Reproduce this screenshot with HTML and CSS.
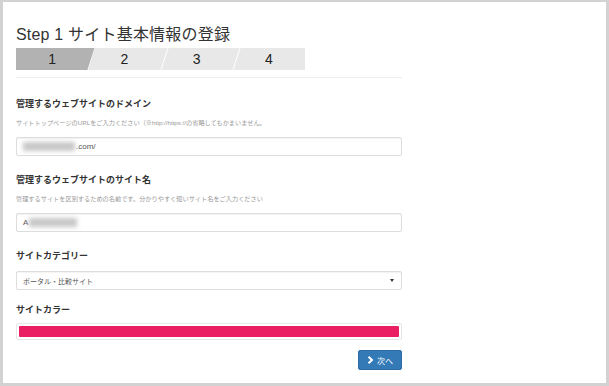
FILE: index.html
```html
<!DOCTYPE html>
<html>
	<head>
		<title>Step 1 サイト基本情報の登録</title>
		<link rel="stylesheet" href="styles.css">
	</head>
	<body>
		<div class="frame">
			<div class="wizard">
				<h2 class="title">Step 1 サイト基本情報の登録</h2>
				<div class="steps">
					<div class="step active">1</div>
					<div class="step">2</div>
					<div class="step">3</div>
					<div class="step">4</div>
				</div>
				<hr class="rule">

				<div class="group first">
					<label class="label">管理するウェブサイトのドメイン</label>
					<p class="help">サイトトップページのURLをご入力ください（※http://https://の省略してもかまいません。</p>
					<div class="field"><span class="blur blur-domain"></span>.com/</div>
				</div>

				<div class="group">
					<label class="label">管理するウェブサイトのサイト名</label>
					<p class="help">管理するサイトを区別するための名前です。分かりやすく短いサイト名をご入力ください</p>
					<div class="field">A<span class="blur blur-name"></span></div>
				</div>

				<div class="group">
					<label class="label">サイトカテゴリー</label>
					<div class="field select">ポータル・比較サイト<span class="caret"></span></div>
				</div>

				<div class="group color-group">
					<label class="label">サイトカラー</label>
					<div class="color"><div class="swatch"></div></div>
				</div>

				<div class="actions">
					<button class="next">
						<svg width="7" height="8" viewBox="0 0 7 8"><path d="M1.5 0.8 L5 4 L1.5 7.2" fill="none" stroke="#fff" stroke-width="2"/></svg>
						次へ
					</button>
				</div>
			</div>
		</div>
	</body>
</html>
```

FILE: styles.css
```css
body {
	margin: 0;
	font-family: "Liberation Sans", "Noto Sans CJK JP", sans-serif;
	color: #333;
}
.frame {
	width: 609px;
	height: 386px;
	box-sizing: border-box;
	border: 3px solid #d2d2d2;
	border-top-width: 2px;
	background: #fff;
}
.wizard {
	width: 386px;
	padding: 0 0 0 13px;
}
.title {
	margin: 0;
	padding-top: 22px;
	font-size: 16px;
	font-weight: normal;
	line-height: 22px;
	letter-spacing: 0.2px;
	color: #333;
}
.steps {
	display: flex;
	width: 289px;
	height: 22px;
	margin-top: 2px;
	overflow: hidden;
}
.step {
	flex: 1;
	position: relative;
	background: #e8e8e8;
	text-align: center;
	font-size: 14px;
	line-height: 22px;
	color: #222;
}
.step.active {
	background: #b2b2b2;
}
.step::after {
	content: "";
	position: absolute;
	top: 0;
	bottom: 0;
	right: -4px;
	width: 7px;
	background: inherit;
	border-right: 1px solid #fff;
	transform: skewX(-18deg);
	z-index: 1;
}
.step:last-child::after {
	display: none;
}
.rule {
	margin: 7px 0 0;
	border: 0;
	border-top: 1px solid #eee;
}
.group {
	margin-top: 18px;
}
.group.first {
	margin-top: 20px;
}
.group.color-group {
	margin-top: 14px;
}
.label {
	display: block;
	font-size: 9px;
	font-weight: bold;
	line-height: 12px;
	color: #333;
}
.help {
	margin: 9px 0 0;
	font-size: 6.2px;
	line-height: 8px;
	color: #999;
}
.field {
	display: flex;
	align-items: center;
	box-sizing: border-box;
	height: 19px;
	margin-top: 10px;
	padding: 0 6px;
	border: 1px solid #ddd;
	border-radius: 2px;
	box-shadow: inset 0 1px 1px rgba(0, 0, 0, 0.05);
	font-size: 8px;
	color: #555;
}
.blur {
	display: inline-block;
	height: 9px;
	background: #c8c8c8;
	filter: blur(2px);
}
.blur-domain {
	width: 52px;
	margin-right: 1px;
}
.blur-name {
	width: 48px;
	margin-left: 1px;
}
.select {
	justify-content: space-between;
	margin-top: 9px;
	font-size: 7px;
}
.caret {
	width: 0;
	height: 0;
	margin-right: 1px;
	border-left: 2px solid transparent;
	border-right: 2px solid transparent;
	border-top: 3px solid #333;
}
.color {
	height: 11px;
	margin-top: 7px;
	padding: 2px;
	border: 1px solid #e6e6e6;
	border-radius: 2px;
}
.swatch {
	height: 11px;
	background: #e91e63;
	border-radius: 1px;
}
.actions {
	display: flex;
	justify-content: flex-end;
	margin-top: 10px;
}
.next {
	display: flex;
	align-items: center;
	gap: 3px;
	height: 20px;
	padding: 0 8px;
	background: #337ab7;
	color: #fff;
	border: 1px solid #2e6da4;
	border-radius: 2px;
	font-family: "Noto Sans CJK JP", sans-serif;
	font-size: 8px;
}
```
